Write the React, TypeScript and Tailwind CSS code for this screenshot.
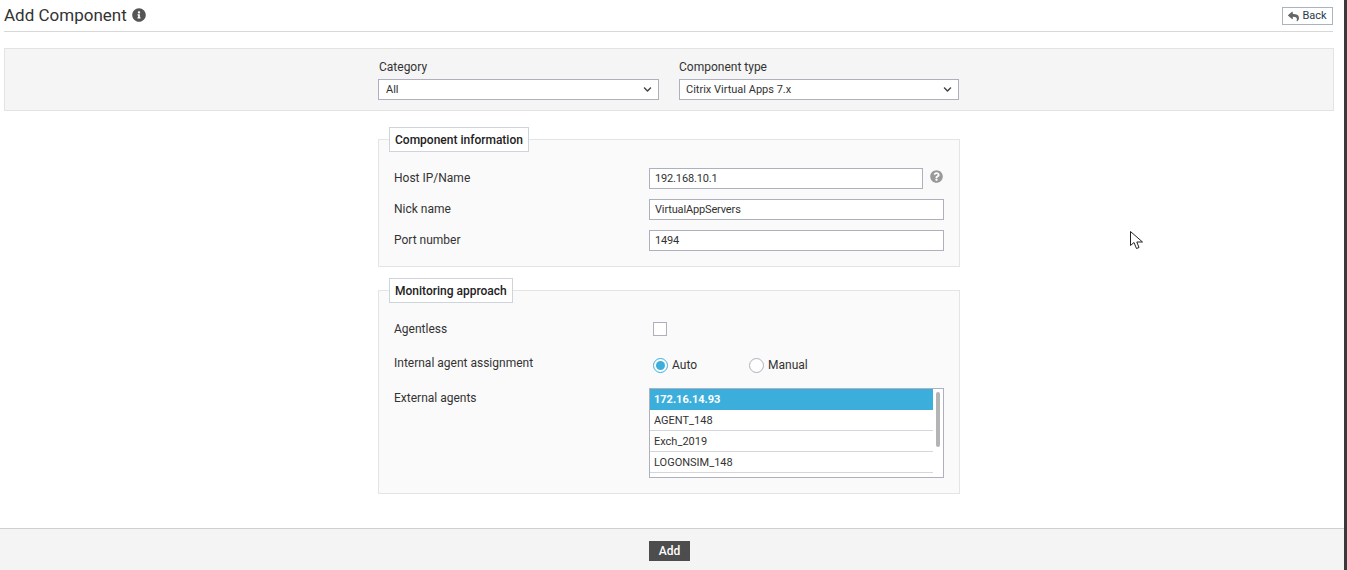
import { FaChevronDown, FaInfoCircle, FaQuestionCircle, FaReply } from "react-icons/fa";

const inputClass =
  "h-[21px] border border-[#aeb1bd] bg-white px-[5px] text-[11px] tracking-[-0.15px] text-[#333] outline-none";

function SelectBox({ value, width }: { value: string; width: string }) {
  return (
    <div className={`flex h-[21px] ${width} items-center justify-between border border-[#aeb1bd] bg-white pr-[6px] text-[11px] text-[#333]`}>
      <span className="pt-[1px]">{value}</span>
      <FaChevronDown className="text-[9px] text-[#444]" />
    </div>
  );
}

function Legend({ children }: { children: string }) {
  return (
    <legend className="-ml-[5px] h-[25px] border border-[#cfd4da] bg-white px-[5px] text-[12px] leading-[24px] font-medium text-[#222]">
      {children}
    </legend>
  );
}

export default function App() {
  return (
    <div className="relative flex h-[570px] w-full overflow-hidden bg-white font-['Roboto',sans-serif] text-[12px] text-[#333]">
      <main className="flex h-full w-[1344px] flex-col">
        {/* header */}
        <div className="mr-[11px] ml-[4px] flex h-[32px] items-center justify-between border-b border-[#d8d8d8]">
          <h1 className="mb-[2px] flex items-center gap-[5px] text-[17px] leading-[24px] font-normal text-[#333]">
            Add Component
            <FaInfoCircle className="text-[14px] text-[#555]" />
          </h1>
          <button className="mt-[1px] flex h-[18px] w-[51px] items-center justify-center gap-[3px] border border-[#aab4c0] bg-white text-[11px] text-[#2b3a4a]">
            <FaReply className="text-[11px] text-[#666]" />
            Back
          </button>
        </div>

        {/* category filter */}
        <div className="mt-[16px] mr-[10px] ml-[4px] flex h-[63px] justify-center gap-[20px] border border-[#e3e3e3] bg-[#f5f5f5] pt-[10px] pr-[1px]">
          <div>
            <label className="block h-[20px] pl-[1px] leading-[17px] text-[#333]">Category</label>
            <SelectBox value="All" width="w-[281px] pl-[7px]" />
          </div>
          <div>
            <label className="block h-[20px] leading-[17px] text-[#333]">Component type</label>
            <SelectBox value="Citrix Virtual Apps 7.x" width="w-[280px] pl-[6px]" />
          </div>
        </div>

        {/* component information */}
        <fieldset className="mt-[16px] ml-[378px] h-[140px] w-[582px] border border-[#e4e4e4] bg-[#fafafa] px-[15px] pt-[16px]">
          <Legend>Component information</Legend>
          <div className="flex flex-col gap-[10px]">
            <div className="flex items-center">
              <span className="w-[255px] pb-[2px]">Host IP/Name</span>
              <input readOnly defaultValue="192.168.10.1" className={`${inputClass} w-[274px]`} />
              <FaQuestionCircle className="mb-[4px] ml-[7px] text-[13px] text-[#999]" />
            </div>
            <div className="flex items-center">
              <span className="w-[255px] pb-[2px]">Nick name</span>
              <input readOnly defaultValue="VirtualAppServers" className={`${inputClass} w-[295px]`} />
            </div>
            <div className="flex items-center">
              <span className="w-[255px] pb-[2px]">Port number</span>
              <input readOnly defaultValue="1494" className={`${inputClass} w-[295px]`} />
            </div>
          </div>
        </fieldset>

        {/* monitoring approach */}
        <fieldset className="mt-[11px] ml-[378px] h-[216px] w-[582px] border border-[#e4e4e4] bg-[#fafafa] px-[15px] pt-[18px]">
          <Legend>Monitoring approach</Legend>
          <div className="flex h-[15px] items-center">
            <span className="w-[259px]">Agentless</span>
            <span className="h-[14px] w-[14px] border border-[#aeb1bd] bg-white" />
          </div>
          <div className="mt-[21px] flex h-[16px] items-center">
            <span className="w-[259px] -translate-y-[2px]">Internal agent assignment</span>
            <span className="flex h-[15px] w-[15px] items-center justify-center rounded-full border border-[#3baedb] bg-white">
              <span className="h-[9px] w-[9px] rounded-full bg-[#3baedb]" />
            </span>
            <span className="ml-[4px] w-[77px]">Auto</span>
            <span className="h-[15px] w-[15px] rounded-full border border-[#aeb1bd] bg-white" />
            <span className="ml-[4px]">Manual</span>
          </div>
          <div className="mt-[15px] flex items-start">
            <span className="mt-[1px] w-[255px]">External agents</span>
            <div className="relative h-[90px] w-[295px] overflow-hidden border border-[#aeb1bd] bg-white pr-[10px] text-[11px]">
              <div className="flex h-[21px] items-center bg-[#3baedb] px-[4px] pt-[1px] font-bold text-white">172.16.14.93</div>
              {["AGENT_148", "Exch_2019", "LOGONSIM_148", ""].map((a) => (
                <div key={a} className="flex h-[21px] items-center border-b border-[#d4d6dc] px-[4px] pt-[2px] text-[#333]">
                  {a}
                </div>
              ))}
              <div className="absolute top-[3px] right-[3px] h-[55px] w-[4px] rounded-full bg-[#b4b4b4]" />
            </div>
          </div>
        </fieldset>

        {/* footer */}
        <div className="mt-auto flex h-[42px] justify-center border-t border-[#cfcfcf] bg-[#f4f4f4] pt-[12px] pr-[5px]">
          <button className="h-[20px] w-[41px] bg-[#4d4d4d] text-[12px] font-medium text-white">Add</button>
        </div>
      </main>

      {/* window scrollbar edge */}
      <div className="h-full w-[3px] bg-[#3a3a3a]" />

      {/* mouse pointer */}
      <svg className="absolute top-[231px] left-[1130px]" width="14" height="19" viewBox="0 0 14 19" fill="white" stroke="#222" strokeWidth="1">
        <path d="M0.5 0.5V14.5L4 11.5L6.5 17.5L9 16.5L6.8 11H12.5Z" />
      </svg>
    </div>
  );
}
